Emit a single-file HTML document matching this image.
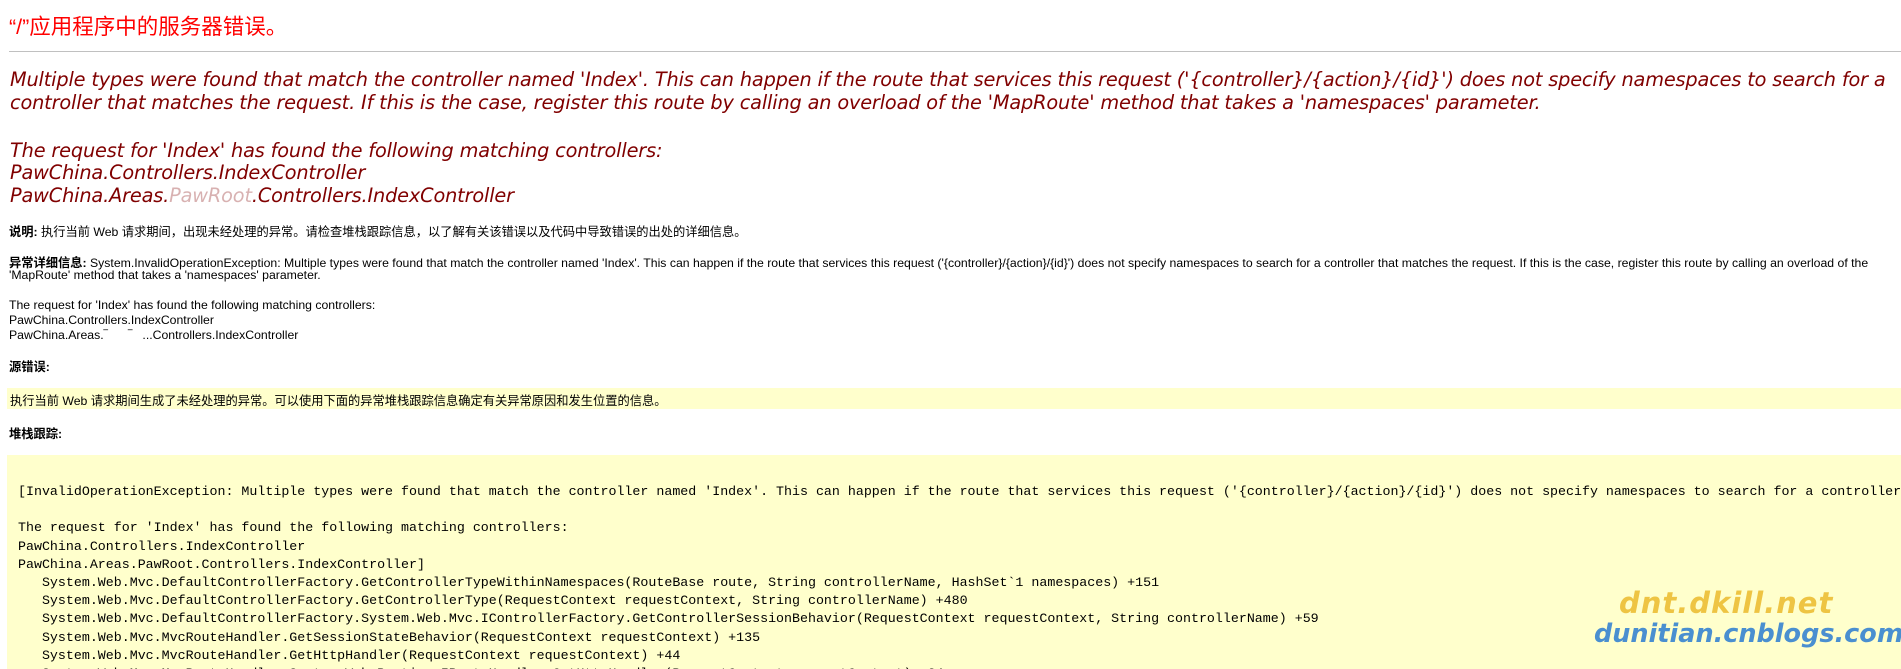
<!DOCTYPE html>
<html><head><meta charset="utf-8"><style>
html,body{margin:0;padding:0;background:#fff;width:1901px;height:669px;overflow:hidden;position:relative}
.a{position:absolute;white-space:nowrap}
.t{font-family:"Liberation Sans","Noto Sans CJK SC",sans-serif;font-size:21.5px;color:#ff0000;left:9px;top:10px}
.i{font-family:"DejaVu Sans","Noto Sans CJK SC",sans-serif;font-style:oblique;font-size:19.3px;color:#800000;left:10px;letter-spacing:-0.15px}
.s{font-family:"Liberation Sans","Noto Sans CJK SC",sans-serif;font-size:12.25px;color:#000;left:9px}
.b{font-weight:bold}
.m{font-family:"Liberation Mono",monospace;font-size:13.3px;color:#000}
</style></head><body>
<div class="a t">“/”应用程序中的服务器错误。</div>
<div class="a" style="left:9px;right:0;top:51px;height:1px;background:#c0c0c0"></div>

<div class="a i" style="top:68px">Multiple types were found that match the controller named 'Index'. This can happen if the route that services this request ('{controller}/{action}/{id}') does not specify namespaces to search for a</div>
<div class="a i" style="top:91px">controller that matches the request. If this is the case, register this route by calling an overload of the 'MapRoute' method that takes a 'namespaces' parameter.</div>
<div class="a i" style="top:139px">The request for 'Index' has found the following matching controllers:</div>
<div class="a i" style="top:161px">PawChina.Controllers.IndexController</div>
<div class="a i" style="top:184px">PawChina.Areas.<span style="opacity:.3">PawRoot</span>.Controllers.IndexController</div>

<div class="a s" style="top:222px"><span class="b">说明:</span> 执行当前 Web 请求期间，出现未经处理的异常。请检查堆栈跟踪信息，以了解有关该错误以及代码中导致错误的出处的详细信息。</div>
<div class="a s" style="top:253px"><span class="b">异常详细信息:</span> System.InvalidOperationException: Multiple types were found that match the controller named 'Index'. This can happen if the route that services this request ('{controller}/{action}/{id}') does not specify namespaces to search for a controller that matches the request. If this is the case, register this route by calling an overload of the</div>
<div class="a s" style="top:268px">'MapRoute' method that takes a 'namespaces' parameter.</div>
<div class="a s" style="top:298px">The request for 'Index' has found the following matching controllers:</div>
<div class="a s" style="top:313px">PawChina.Controllers.IndexController</div>
<div class="a s" style="top:328px">PawChina.Areas.‾&nbsp;&nbsp;&nbsp;&nbsp;&nbsp;&nbsp;‾&nbsp;&nbsp;&nbsp;...Controllers.IndexController</div>
<div class="a s b" style="top:357px">源错误:</div>
<div class="a" style="left:7px;right:0;top:388px;height:21px;background:#ffffcc"></div>
<div class="a s" style="top:391px;left:10px">执行当前 Web 请求期间生成了未经处理的异常。可以使用下面的异常堆栈跟踪信息确定有关异常原因和发生位置的信息。</div>
<div class="a s b" style="top:424px">堆栈跟踪:</div>

<div class="a" style="left:7px;right:0;top:455px;bottom:0;background:#ffffcc"></div>
<div class="a m" style="left:18px;top:483px;line-height:18.2px">[InvalidOperationException: Multiple types were found that match the controller named 'Index'. This can happen if the route that services this request ('{controller}/{action}/{id}') does not specify namespaces to search for a controller that matches the request.<br><br>The request for 'Index' has found the following matching controllers:<br>PawChina.Controllers.IndexController<br>PawChina.Areas.PawRoot.Controllers.IndexController]<br>
&nbsp;&nbsp;&nbsp;System.Web.Mvc.DefaultControllerFactory.GetControllerTypeWithinNamespaces(RouteBase route, String controllerName, HashSet`1 namespaces) +151<br>
&nbsp;&nbsp;&nbsp;System.Web.Mvc.DefaultControllerFactory.GetControllerType(RequestContext requestContext, String controllerName) +480<br>
&nbsp;&nbsp;&nbsp;System.Web.Mvc.DefaultControllerFactory.System.Web.Mvc.IControllerFactory.GetControllerSessionBehavior(RequestContext requestContext, String controllerName) +59<br>
&nbsp;&nbsp;&nbsp;System.Web.Mvc.MvcRouteHandler.GetSessionStateBehavior(RequestContext requestContext) +135<br>
&nbsp;&nbsp;&nbsp;System.Web.Mvc.MvcRouteHandler.GetHttpHandler(RequestContext requestContext) +44<br>
&nbsp;&nbsp;&nbsp;System.Web.Mvc.MvcRouteHandler.System.Web.Routing.IRouteHandler.GetHttpHandler(RequestContext requestContext) +34</div>

<div class="a" style="left:1619px;top:586px;font-family:'DejaVu Sans',cursive;font-style:oblique;font-weight:bold;font-size:29px;color:#eec443;letter-spacing:1px">dnt.dkill.net</div>
<div class="a" style="left:1594px;top:619px;font-family:'DejaVu Sans',cursive;font-style:oblique;font-weight:bold;font-size:25.5px;color:#4a8fd0;letter-spacing:0px">dunitian.cnblogs.com</div>
</body></html>
